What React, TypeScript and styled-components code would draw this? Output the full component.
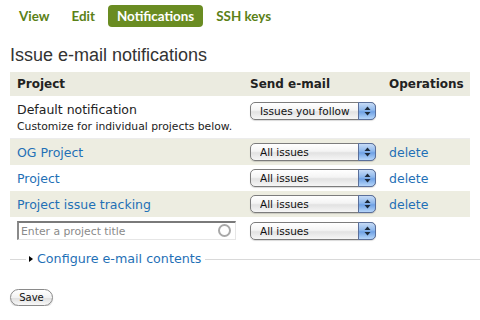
import styled, { createGlobalStyle } from 'styled-components';

const GlobalStyle = createGlobalStyle`
  html, body { margin: 0; padding: 0; background: #fff; }
  body { font-family: "DejaVu Sans", sans-serif; color: #222; }
`;

interface Row {
  title: string;
  value: string;
}

const rows: Row[] = [
  { title: 'OG Project', value: 'All issues' },
  { title: 'Project', value: 'All issues' },
  { title: 'Project issue tracking', value: 'All issues' },
];

function AquaSelect({ value }: { value: string }) {
  return (
    <SelectWrap>
      <NativeSelect defaultValue={value}>
        <option>{value}</option>
        <option>None</option>
      </NativeSelect>
      <Arrows>
        <svg width="7" height="10" viewBox="0 0 7 10">
          <path d="M3.5 0.5 L6.5 4 L0.5 4 Z" fill="#1d2a3a" />
          <path d="M3.5 9.5 L6.5 6 L0.5 6 Z" fill="#1d2a3a" />
        </svg>
      </Arrows>
    </SelectWrap>
  );
}

export default function App() {
  return (
    <Page>
      <GlobalStyle />
      <Tabs>
        <Tab>View</Tab>
        <Tab>Edit</Tab>
        <Tab $active>Notifications</Tab>
        <Tab>SSH keys</Tab>
      </Tabs>
      <Heading>Issue e-mail notifications</Heading>
      <Table>
        <colgroup>
          <col style={{ width: 233 }} />
          <col style={{ width: 139 }} />
          <col style={{ width: 88 }} />
        </colgroup>
        <thead>
          <tr>
            <Th>Project</Th>
            <Th>Send e-mail</Th>
            <Th>Operations</Th>
          </tr>
        </thead>
        <tbody>
          <DefaultRow>
            <Td>
              <Title>Default notification</Title>
              <Description>Customize for individual projects below.</Description>
            </Td>
            <Td>
              <AquaSelect value="Issues you follow" />
            </Td>
            <Td />
          </DefaultRow>
          {rows.map((r, i) => (
            <Tr key={r.title} $striped={i % 2 === 0}>
              <Td>
                <Link href="#">{r.title}</Link>
              </Td>
              <Td>
                <AquaSelect value={r.value} />
              </Td>
              <Td>
                <Link href="#">delete</Link>
              </Td>
            </Tr>
          ))}
          <Tr $striped={false}>
            <Td>
              <InputWrap>
                <TitleInput placeholder="Enter a project title" />
                <Throbber />
              </InputWrap>
            </Td>
            <Td>
              <AquaSelect value="All issues" />
            </Td>
            <Td />
          </Tr>
        </tbody>
      </Table>
      <Fieldset>
        <Legend>
          <Triangle />
          <Link href="#">Configure e-mail contents</Link>
        </Legend>
      </Fieldset>
      <SaveButton>Save</SaveButton>
    </Page>
  );
}

const Page = styled.div`
  padding: 5px 0 0 10px;
  width: 470px;
`;

const Tabs = styled.ul`
  display: flex;
  gap: 4px;
  list-style: none;
  margin: 0;
  padding: 0;
`;

const Tab = styled.li<{ $active?: boolean }>`
  font-family: Lato, "Open Sans", sans-serif;
  font-weight: 700;
  font-size: 13.4px;
  line-height: 16px;
  padding: 3px 9px;
  border-radius: 4px;
  color: ${(p) => (p.$active ? '#fff' : '#5b8117')};
  background: ${(p) => (p.$active ? '#6a8c22' : 'transparent')};
`;

const Heading = styled.h2`
  font-family: "Liberation Sans", Arial, sans-serif;
  font-weight: normal;
  font-size: 18px;
  line-height: 22px;
  color: #333;
  margin: 17px 0 6px;
`;

const Table = styled.table`
  width: 460px;
  border-collapse: collapse;
  table-layout: fixed;
`;

const Th = styled.th`
  background: #ebebe0;
  text-align: left;
  font-size: 12px;
  font-weight: bold;
  color: #222;
  height: 24px;
  padding: 0 7px;
`;

const Tr = styled.tr<{ $striped: boolean }>`
  background: ${(p) => (p.$striped ? '#edede1' : '#fff')};
  height: 26px;
`;

const DefaultRow = styled.tr`
  background: #fff;
  border-bottom: 1px solid #ececec;
`;

const Td = styled.td`
  padding: 4px 7px;
  vertical-align: middle;
  font-size: 12.5px;

  ${DefaultRow} & {
    vertical-align: top;
    padding: 6px 7px 4px;
  }
`;

const Title = styled.div`
  line-height: 15px;
  color: #222;
`;

const Description = styled.div`
  font-size: 10.8px;
  line-height: 14px;
  margin-top: 3px;
  color: #222;
`;

const Link = styled.a`
  color: #1f70b6;
  text-decoration: none;
`;

const SelectWrap = styled.div`
  position: relative;
  width: 126px;
  height: 18px;
`;

const NativeSelect = styled.select`
  appearance: none;
  width: 100%;
  height: 18px;
  box-sizing: border-box;
  margin: 0;
  padding: 0 22px 0 9px;
  border: 1px solid #7c7c7c;
  border-radius: 5px;
  background: linear-gradient(#ffffff, #f4f4f4 45%, #e2e2e2 55%, #f6f6f6);
  font-family: "DejaVu Sans", sans-serif;
  font-size: 10.5px;
  line-height: 16px;
  color: #111;
  box-shadow: 0 1px 1px rgba(0, 0, 0, 0.15);
`;

const Arrows = styled.span`
  position: absolute;
  right: 0;
  top: 0;
  width: 18px;
  height: 18px;
  box-sizing: border-box;
  display: flex;
  align-items: center;
  justify-content: center;
  border: 1px solid #5a6f9a;
  border-radius: 0 5px 5px 0;
  background: linear-gradient(#c6dbf6, #8db7ec 45%, #6fa1e4 55%, #b6d6fa);
  pointer-events: none;
`;

const InputWrap = styled.div`
  position: relative;
  width: 219px;
`;

const TitleInput = styled.input`
  width: 219px;
  height: 19px;
  box-sizing: border-box;
  margin: 0;
  padding: 0 20px 0 2px;
  border-style: solid;
  border-width: 2px 1px 1px 2px;
  border-color: #7a7a7a #e6e6e6 #e6e6e6 #8a8a8a;
  font-family: "DejaVu Sans", sans-serif;
  font-size: 10.8px;
  color: #222;

  &::placeholder {
    color: #8a8a8a;
  }
`;

const Throbber = styled.span`
  position: absolute;
  right: 5px;
  top: 4px;
  width: 9px;
  height: 9px;
  box-sizing: content-box;
  border: 2px solid #a8a8a8;
  border-radius: 50%;
  margin-top: -1px;
`;

const Fieldset = styled.fieldset`
  margin: 7px -10px 0 0;
  padding: 0;
  border: none;
  border-top: 1px solid #d9d9d9;
  min-width: 0;
`;

const Legend = styled.legend`
  display: flex;
  align-items: center;
  gap: 4px;
  margin-left: 16px;
  padding: 0 4px 0 3px;
  font-size: 12.7px;
  line-height: 16px;
`;

const Triangle = styled.span`
  width: 0;
  height: 0;
  border-top: 3.5px solid transparent;
  border-bottom: 3.5px solid transparent;
  border-left: 4px solid #000;
`;

const SaveButton = styled.button`
  display: block;
  margin-top: 22px;
  height: 17px;
  width: 43px;
  padding: 0;
  border: 1px solid #8a8a8a;
  border-radius: 9px;
  background: linear-gradient(#ffffff, #f2f2f2 50%, #e0e0e0 55%, #f8f8f8);
  font-family: "DejaVu Sans", sans-serif;
  font-size: 10px;
  color: #111;
  box-shadow: 0 1px 1px rgba(0, 0, 0, 0.2);
`;
